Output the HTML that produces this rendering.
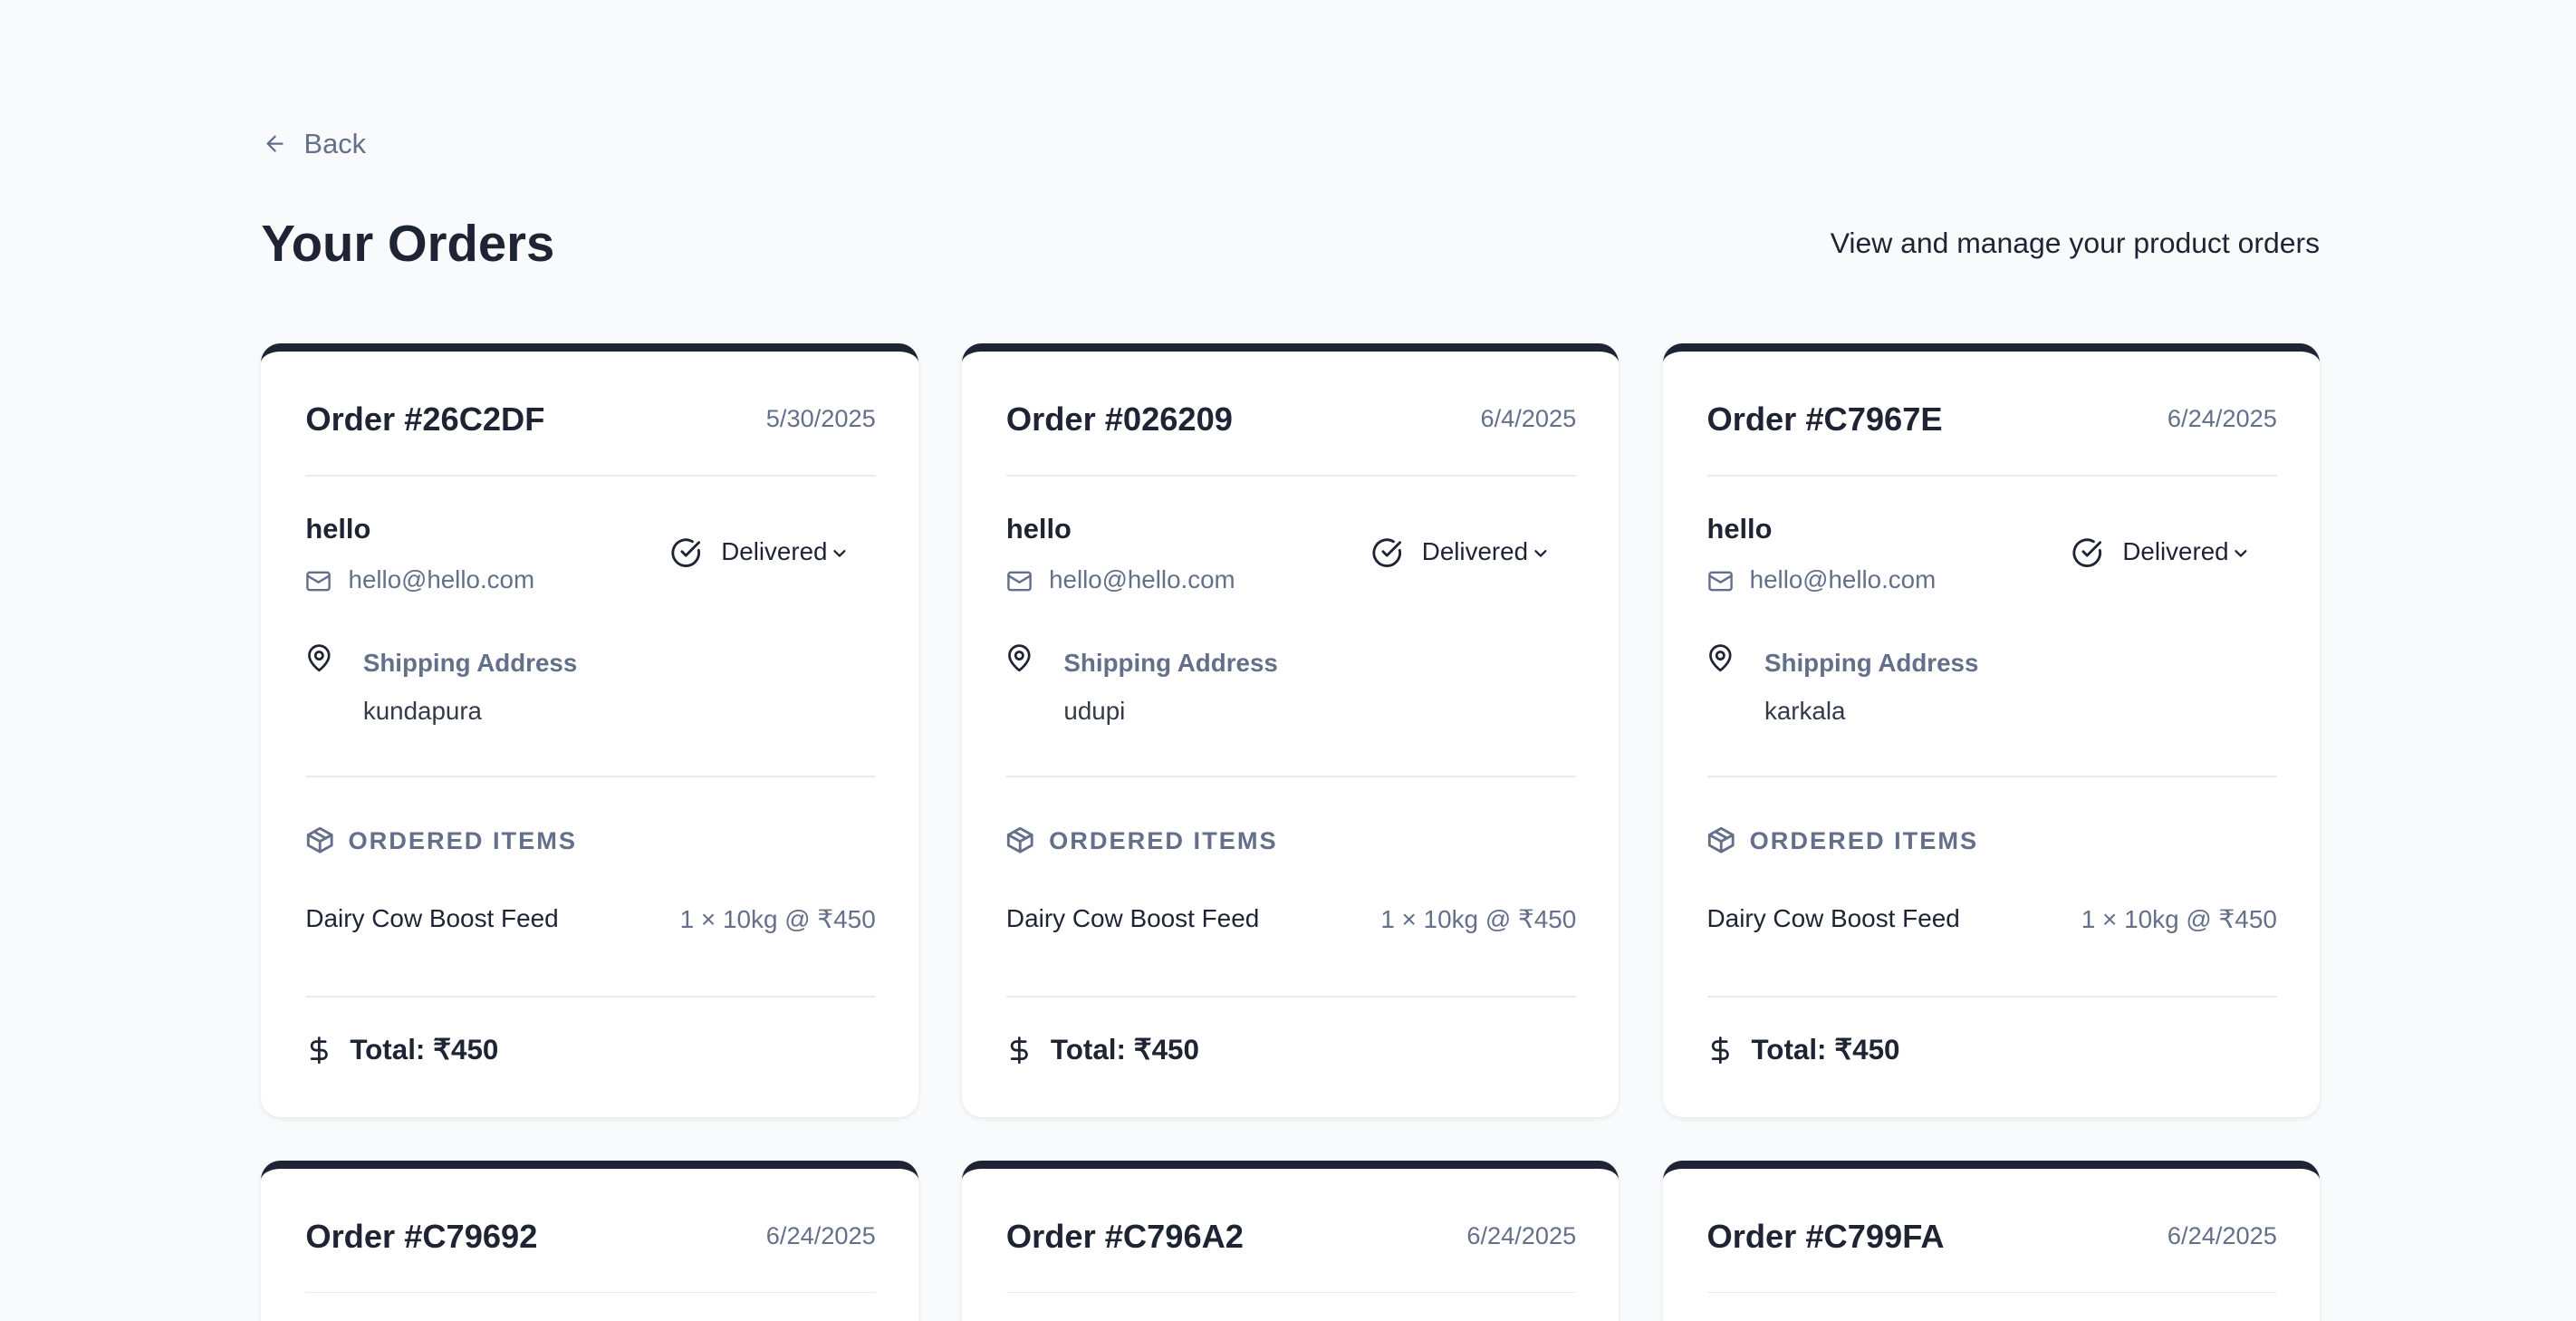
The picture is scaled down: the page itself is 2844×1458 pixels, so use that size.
<!DOCTYPE html>
<html><head><meta charset="utf-8"><style>
html,body{margin:0;padding:0;background:#f8fafc;overflow:hidden;width:2844px;height:1458px;}
#w{width:1568px;height:804px;zoom:1.81378;overflow:hidden;position:relative;font-family:"Liberation Sans",Arial,sans-serif;color:#1e2433;background:#f8fafc;}
.a{position:absolute;white-space:nowrap;}
.card{position:absolute;width:400px;height:471px;background:#fff;border-radius:12px;border-top:5px solid #1e2433;box-sizing:border-box;box-shadow:0 1px 3px rgba(0,0,0,.08);overflow:hidden;}
.hr{position:absolute;left:27px;right:26px;height:1px;background:#e8ecf1;}
.t{font-size:20px;font-weight:bold;}
.g{color:#64708a;}
svg{position:absolute;fill:none;stroke-linecap:round;stroke-linejoin:round;}
</style></head><body><div id="w">
<svg style="left:160px;top:80px" width="15" height="15" viewBox="0 0 24 24" stroke="#64708a" stroke-width="2"><path d="M19 12H5M12 19l-7-7 7-7"/></svg>
<div class="a g" style="left:185px;top:78px;font-size:17px;">Back</div>
<div class="a" style="left:159px;top:130px;font-size:31px;font-weight:bold;">Your Orders</div>
<div class="a" style="right:156px;top:138px;font-size:17.6px;">View and manage your product orders</div>
<div id="c"></div>
</div>
<script>
var d=[["26C2DF","5/30/2025","kundapura"],["026209","6/4/2025","udupi"],["C7967E","6/24/2025","karkala"],["C79692","6/24/2025",""],["C796A2","6/24/2025",""],["C799FA","6/24/2025",""]];
var h="";
d.forEach(function(o,i){var x=159+(i%3)*426.5,y=209+Math.floor(i/3)*497;
h+='<div class="card" style="left:'+x+'px;top:'+y+'px">'+
'<div class="a t" style="left:27px;top:30px">Order #'+o[0]+'</div>'+
'<div class="a g" style="right:26px;top:32px;font-size:15px">'+o[1]+'</div>'+
'<div class="hr" style="top:75px"></div>'+
'<div class="a" style="left:27px;top:98px;font-size:17px;font-weight:bold">hello</div>'+
'<svg style="left:27px;top:132px" width="16" height="16" viewBox="0 0 24 24" stroke="#64708a" stroke-width="2"><rect x="2" y="4" width="20" height="16" rx="2"/><path d="M22 7l-10 6L2 7"/></svg>'+
'<div class="a g" style="left:53px;top:130px;font-size:15.3px">hello@hello.com</div>'+
'<svg style="left:249px;top:113px" width="19" height="19" viewBox="0 0 24 24" stroke="#1e2433" stroke-width="2"><path d="M21.8 10A10 10 0 1 1 17 3.3"/><path d="M9 11l3 3L22 4"/></svg>'+
'<div class="a" style="left:280px;top:113px;font-size:15.3px">Delivered</div>'+
'<svg style="left:346px;top:117px" width="12" height="12" viewBox="0 0 24 24" stroke="#1e2433" stroke-width="2.5"><path d="M6 9l6 6 6-6"/></svg>'+
'<svg style="left:26px;top:177px" width="18" height="19" viewBox="0 0 24 24" stroke="#1e2433" stroke-width="2"><path d="M20 10c0 6-8 12-8 12s-8-6-8-12a8 8 0 0 1 16 0z"/><circle cx="12" cy="10" r="3"/></svg>'+
'<div class="a g" style="left:62px;top:181px;font-size:15.3px;font-weight:bold">Shipping Address</div>'+
'<div class="a" style="left:62px;top:210px;font-size:15.3px;color:#333a48">'+o[2]+'</div>'+
'<div class="hr" style="top:258px"></div>'+
'<svg style="left:26px;top:288px" width="19" height="19" viewBox="0 0 24 24" stroke="#64708a" stroke-width="2"><path d="M21 8l-9-5-9 5v8l9 5 9-5z"/><path d="M3 8l9 5 9-5M12 13v8M7.5 5.5l9 5"/></svg>'+
'<div class="a g" style="left:53px;top:289px;font-size:15px;font-weight:bold;letter-spacing:1.1px">ORDERED ITEMS</div>'+
'<div class="a" style="left:27px;top:336px;font-size:15.4px">Dairy Cow Boost Feed</div>'+
'<div class="a g" style="right:26px;top:336px;font-size:15.4px">1 × 10kg @ ₹450</div>'+
'<div class="hr" style="top:392px"></div>'+
'<svg style="left:26px;top:415px" width="18" height="20" viewBox="0 0 24 24" stroke="#1e2433" stroke-width="2"><path d="M12 2v20M17 5H9.5a3.5 3.5 0 0 0 0 7h5a3.5 3.5 0 0 1 0 7H6"/></svg>'+
'<div class="a" style="left:54px;top:415px;font-size:17.3px;font-weight:bold">Total: ₹450</div>'+
'</div>';});
document.getElementById("c").innerHTML=h;
</script>
</body></html>
